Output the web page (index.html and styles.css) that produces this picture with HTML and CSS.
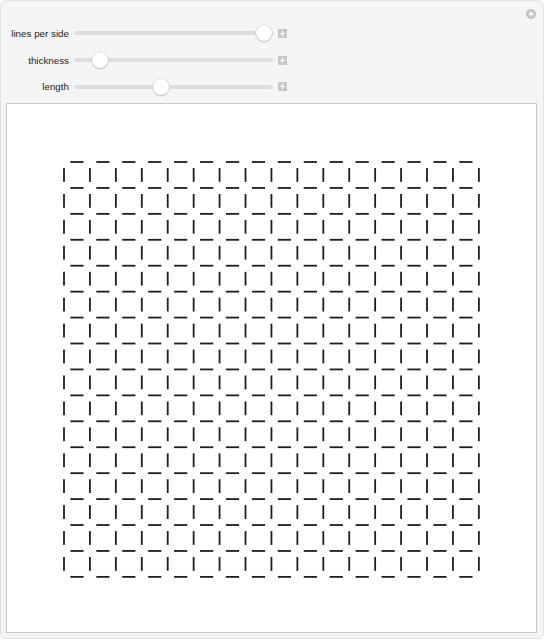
FILE: index.html
```html
<!DOCTYPE html>
<html>
<head>
<meta charset="utf-8">
<link rel="stylesheet" href="styles.css">
</head>
<body>
<div class="panel">
  <span class="corner-btn"><svg width="10" height="10" viewBox="0 0 10 10"><circle cx="5" cy="5" r="5" fill="#c4c4c4"/><path d="M5 2.5v5M2.5 5h5" stroke="#fff" stroke-width="1.4"/></svg></span>
  <div class="controls">
    <div class="row">
      <span class="label">lines per side</span>
      <div class="slider"><div class="track"></div><div class="thumb" style="left: 95.5%"></div></div>
      <span class="plus"><svg width="9" height="9" viewBox="0 0 9 9"><rect width="9" height="9" fill="#c8c8c8"/><path d="M4.5 2v5M2 4.5h5" stroke="#fff" stroke-width="1.2"/></svg></span>
    </div>
    <div class="row">
      <span class="label">thickness</span>
      <div class="slider"><div class="track"></div><div class="thumb" style="left: 13%"></div></div>
      <span class="plus"><svg width="9" height="9" viewBox="0 0 9 9"><rect width="9" height="9" fill="#c8c8c8"/><path d="M4.5 2v5M2 4.5h5" stroke="#fff" stroke-width="1.2"/></svg></span>
    </div>
    <div class="row">
      <span class="label">length</span>
      <div class="slider"><div class="track"></div><div class="thumb" style="left: 43.5%"></div></div>
      <span class="plus"><svg width="9" height="9" viewBox="0 0 9 9"><rect width="9" height="9" fill="#c8c8c8"/><path d="M4.5 2v5M2 4.5h5" stroke="#fff" stroke-width="1.2"/></svg></span>
    </div>
  </div>
  <div class="canvas">
    <svg id="grid" class="grid" width="529" height="528" viewBox="0 0 529 528"></svg>
  </div>
</div>
<script src="script.js"></script>
</body>
</html>
```
FILE: styles.css
```css
html, body {
  margin: 0;
  padding: 0;
  background: #ffffff;
}
body {
  font-family: "Liberation Sans", Arial, sans-serif;
}
.panel {
  position: relative;
  box-sizing: border-box;
  width: 544px;
  height: 639px;
  background: #f5f5f5;
  border: 1px solid #e2e2e2;
  border-radius: 6px;
  padding: 19px 5px 0 5px;
}
.corner-btn {
  position: absolute;
  top: 8px;
  right: 7px;
  width: 10px;
  height: 10px;
  display: block;
}
.corner-btn svg { display: block; }
.controls {
  display: flex;
  flex-direction: column;
  height: 83px;
}
.row {
  display: flex;
  align-items: center;
  height: 26.7px;
}
.label {
  width: 63px;
  text-align: right;
  font-size: 9.8px;
  color: #1a1a1a;
  margin-right: 5px;
  white-space: nowrap;
}
.slider {
  position: relative;
  width: 199px;
  height: 16px;
  margin-right: 5px;
}
.track {
  position: absolute;
  left: 0;
  right: 0;
  top: 6px;
  height: 4px;
  border-radius: 2px;
  background: #dedede;
}
.thumb {
  position: absolute;
  top: 0;
  width: 16px;
  height: 16px;
  margin-left: -8px;
  border-radius: 50%;
  background: #ffffff;
  box-shadow: 0 0 0 0.5px #c8c8c8, 0 1px 1.5px rgba(0,0,0,0.25);
}
.plus svg { display: block; }
.canvas {
  box-sizing: border-box;
  width: 531px;
  height: 530px;
  background: #ffffff;
  border: 1px solid #c9c9c9;
}
.grid {
  display: block;
}
```
FILE: script.js
```js
(function () {
  var svg = document.getElementById('grid');
  var ns = 'http://www.w3.org/2000/svg';
  var n = 16;
  var c = 25.93;
  var ox = 57, oy = 58;
  var half = 6.6;
  var t = 1.8;
  var frag = document.createDocumentFragment();
  function rect(x, y, w, h) {
    var r = document.createElementNS(ns, 'rect');
    r.setAttribute('x', x.toFixed(2));
    r.setAttribute('y', y.toFixed(2));
    r.setAttribute('width', w.toFixed(2));
    r.setAttribute('height', h.toFixed(2));
    r.setAttribute('fill', '#1e1e1e');
    frag.appendChild(r);
  }
  for (var k = 0; k <= n; k++) {
    for (var j = 0; j < n; j++) {
      var cx = ox + c * (j + 0.5);
      var y = oy + c * k;
      rect(cx - half, y - t / 2, half * 2, t);
    }
  }
  for (var k2 = 0; k2 < n; k2++) {
    for (var i = 0; i <= n; i++) {
      var x = ox + c * i;
      var cy = oy + c * (k2 + 0.5);
      rect(x - t / 2, cy - 6.9, t, 13.8);
    }
  }
  svg.appendChild(frag);
})();
```
